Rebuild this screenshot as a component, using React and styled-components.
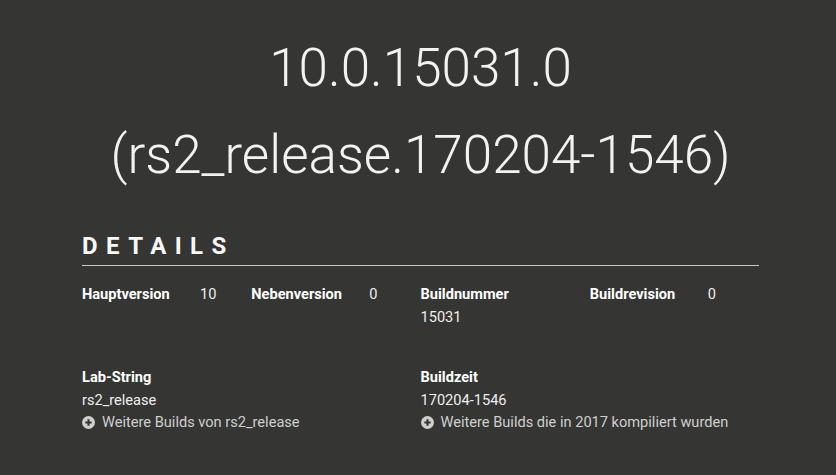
import React from 'react'
import styled, { createGlobalStyle } from 'styled-components'

const GlobalStyle = createGlobalStyle`
  html, body {
    margin: 0;
    padding: 0;
    background: #353533;
  }
  body {
    font-family: Roboto, "Liberation Sans", sans-serif;
    color: #eeeeee;
  }
`

const Page = styled.div`
  min-height: 475px;
  padding: 25px 77px 30px 82px;
  box-sizing: border-box;
`

const Title = styled.h1`
  margin: 0;
  text-align: center;
  font-weight: 300;
  font-size: 53px;
  line-height: 87px;
  color: #f2f2f2;
`

const Heading = styled.h2`
  margin: 33px 0 0;
  padding-bottom: 4px;
  border-bottom: 1px solid #c8c8c8;
  font-size: 24px;
  line-height: 29px;
  font-weight: 700;
  letter-spacing: 8.4px;
  color: #f7f7f7;
`

const Grid = styled.div`
  display: grid;
  grid-template-columns: repeat(4, 1fr);
  row-gap: 38px;
  margin-top: 17px;
`

const Item = styled.div`
  display: flex;
  flex-direction: ${p => (p.stacked ? 'column' : 'row')};
  grid-column: span ${p => p.span || 1};
  font-size: 14.6px;
  line-height: 22.5px;
`

const Label = styled.div`
  font-weight: 700;
  color: #ffffff;
  width: ${p => (p.stacked ? 'auto' : '118px')};
  flex-shrink: 0;
`

const Value = styled.div`
  color: #eeeeee;
`

const MoreLink = styled.a`
  display: flex;
  align-items: center;
  gap: 7px;
  color: #cfcfcf;
  text-decoration: none;
  cursor: pointer;
`

const PlusCircle = () => (
  <svg width="13" height="13" viewBox="0 0 14 14">
    <circle cx="7" cy="7" r="7" fill="#cfcfcf" />
    <path d="M7 3.6v6.8M3.6 7h6.8" stroke="#353533" strokeWidth="2.2" />
  </svg>
)

const facts = [
  { label: 'Hauptversion', value: '10' },
  { label: 'Nebenversion', value: '0' },
  { label: 'Buildnummer', value: '15031', stacked: true },
  { label: 'Buildrevision', value: '0' },
]

const App = () => {
  return (
    <Page>
      <GlobalStyle />
      <Title>
        10.0.15031.0
        <br />
        (rs2_release.170204-1546)
      </Title>
      <Heading>DETAILS</Heading>
      <Grid>
        {facts.map(f => (
          <Item key={f.label} stacked={f.stacked}>
            <Label stacked={f.stacked}>{f.label}</Label>
            <Value>{f.value}</Value>
          </Item>
        ))}
        <Item stacked span={2}>
          <Label stacked>Lab-String</Label>
          <Value>rs2_release</Value>
          <MoreLink>
            <PlusCircle />
            Weitere Builds von rs2_release
          </MoreLink>
        </Item>
        <Item stacked span={2}>
          <Label stacked>Buildzeit</Label>
          <Value>170204-1546</Value>
          <MoreLink>
            <PlusCircle />
            Weitere Builds die in 2017 kompiliert wurden
          </MoreLink>
        </Item>
      </Grid>
    </Page>
  )
}

export default App
